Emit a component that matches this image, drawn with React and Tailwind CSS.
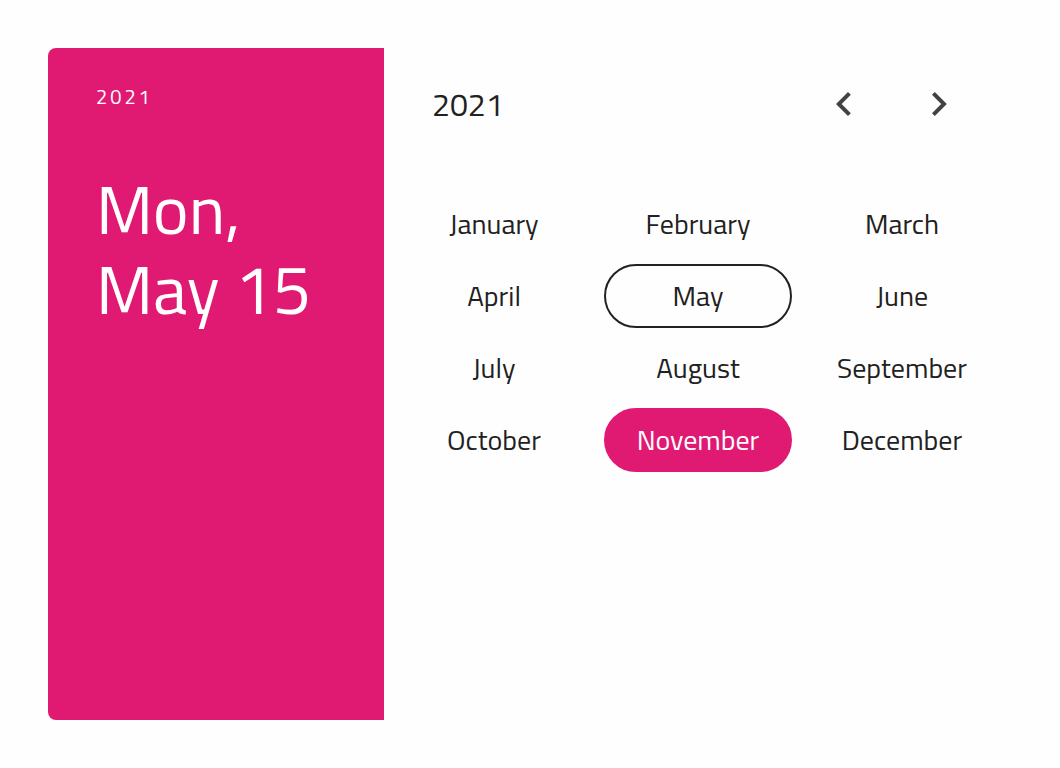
import { useState } from "react";

const months = [
  "January", "February", "March",
  "April", "May", "June",
  "July", "August", "September",
  "October", "November", "December",
];

const CURRENT = "May";

function monthStyle(month, selected) {
  if (month === selected) return "border-[#e01a73] bg-[#e01a73] text-white";
  if (month === CURRENT) return "border-[#212121] text-[#212121]";
  return "border-transparent text-[#212121]";
}

function Arrow({ label, path, onClick }) {
  return (
    <button
      type="button"
      aria-label={label}
      onClick={onClick}
      className="flex size-24 items-center justify-center"
    >
      <svg viewBox="0 0 24 24" className="size-12" fill="#424242" aria-hidden="true">
        <path d={path} />
      </svg>
    </button>
  );
}

export default function App() {
  const [year, setYear] = useState(2021);
  const [selected, setSelected] = useState("November");

  return (
    <main className="min-h-screen bg-[#fefefe] p-12 font-['Titillium_Web',Roboto,sans-serif]">
      <div className="flex min-h-[672px] rounded-lg">
        <aside className="w-84 shrink-0 rounded-l-lg bg-[#e01a73] px-12 pt-[33px] text-white">
          <p className="text-[20px] leading-8 tracking-[3px]">2021</p>
          <h1 className="mt-14 text-[68px] leading-20">
            Mon,
            <br />
            May 15
          </h1>
        </aside>
        <section className="min-w-0 flex-1 px-4 pt-2">
          <header className="flex items-center justify-between pr-2 pl-8">
            <h2 className="text-[32px] leading-12 text-[#212121]">{year}</h2>
            <div className="flex">
              <Arrow
                label="Previous year"
                onClick={() => setYear(year - 1)}
                path="M15.41 16.59 10.83 12l4.58-4.59L14 6l-6 6 6 6z"
              />
              <Arrow
                label="Next year"
                onClick={() => setYear(year + 1)}
                path="M8 16.59 12.58 12 8 7.41 9.41 6l6 6-6 6z"
              />
            </div>
          </header>
          <div className="mt-10 grid grid-cols-3 gap-x-4 gap-y-2">
            {months.map((month) => (
              <button
                key={month}
                type="button"
                aria-pressed={month === selected}
                onClick={() => setSelected(month)}
                className={`h-16 rounded-full border-2 text-[28px] leading-8 ${monthStyle(month, selected)}`}
              >
                {month}
              </button>
            ))}
          </div>
        </section>
      </div>
    </main>
  );
}
